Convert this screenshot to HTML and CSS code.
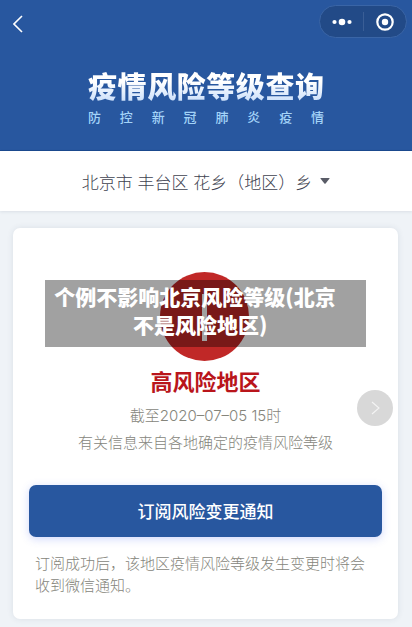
FILE: index.html
```html
<!DOCTYPE html>
<html lang="zh-CN">
<head>
  <meta charset="UTF-8" />
  <meta name="viewport" content="width=device-width, initial-scale=1.0"/>
  <title>疫情风险等级查询</title>
  <link rel="stylesheet" href="styles.css">
</head>
<body>
  <header class="header">
    <div class="nav">
      <button class="back" type="button" aria-label="返回">
        <svg width="10" height="18" viewBox="0 0 10 18"><path d="M9 1L1 9l8 8" fill="none" stroke="#fff" stroke-width="1.6"/></svg>
      </button>
      <div class="capsule">
        <button type="button" aria-label="更多">
          <svg width="20" height="8" viewBox="0 0 20 8" fill="#fff"><circle cx="2.5" cy="4" r="2.1"/><circle cx="10" cy="4" r="3.3"/><circle cx="17.5" cy="4" r="2.1"/></svg>
        </button>
        <button type="button" aria-label="关闭">
          <svg width="18" height="18" viewBox="0 0 18 18"><circle cx="9" cy="9" r="7.7" fill="none" stroke="#fff" stroke-width="2.2"/><circle cx="9" cy="9" r="3.2" fill="#fff"/></svg>
        </button>
      </div>
    </div>
    <div class="banner">
      <h1>疫情风险等级查询</h1>
      <p>防控新冠肺炎疫情</p>
    </div>
  </header>

  <button class="location" type="button">
    <span>北京市 丰台区 花乡（地区）乡</span>
    <svg width="10" height="6" viewBox="0 0 10 6"><path d="M1 0h8q1 0 .4.8L5.6 5.5q-.6.7-1.2 0L.6.8Q0 0 1 0z" fill="#595c67"/></svg>
  </button>

  <main class="card">
    <div class="risk">
      <svg class="risk-icon" width="91" height="90" viewBox="0 0 91 90"><circle cx="44.5" cy="44.5" r="44.5" fill="#c02827"/><path d="M42 22h5v47h-5z" fill="#fff"/></svg>
      <p class="caption">个例不影响北京风险等级(北京&emsp;
不是风险地区)&ensp;</p>
    </div>
    <h2>高风险地区</h2>
    <p class="info">截至2020–07–05 15时</p>
    <p class="info">有关信息来自各地确定的疫情风险等级</p>
    <button class="subscribe" type="button">订阅风险变更通知</button>
    <p class="note">订阅成功后，该地区疫情风险等级发生变更时将会收到微信通知。</p>
    <button class="next" type="button" aria-label="下一张">
      <svg width="9" height="14" viewBox="0 0 9 14"><path d="M1 1l7 6-7 6" fill="none" stroke="#f4f4f4" stroke-width="1.1"/></svg>
    </button>
  </main>
</body>
</html>
```
FILE: styles.css
```css
* {
  box-sizing: border-box;
}

body {
  margin: 0;
  background: #eff3f7;
  font-family: Inter, "Noto Sans CJK SC", sans-serif;
}

h1, h2, p {
  margin: 0;
}

button {
  margin: 0;
  padding: 0;
  border: 0;
  background: none;
  font-family: inherit;
  cursor: pointer;
}

svg {
  display: block;
}

.header {
  height: 151px;
  background: #28579f;
  border-bottom: 1px solid #1b4a8f;
}

.nav {
  display: flex;
  justify-content: space-between;
  padding: 5px 5px 0 13px;
}

.back {
  padding: 5px 0 0;
}

.capsule {
  display: flex;
  width: 88px;
  height: 33px;
  background: #224a87;
  border: 1px solid #3a65a6;
  border-radius: 17px;
}

.capsule button {
  display: flex;
  flex: 1;
  justify-content: center;
  align-items: center;
}

.capsule button + button {
  position: relative;
}

.capsule button + button::before {
  content: "";
  position: absolute;
  left: 0;
  top: 6px;
  bottom: 6px;
  width: 1px;
  background: #3a5e96;
}

.banner {
  width: 236px;
  margin: 30px auto 0;
  color: #a3d3f8;
}

.banner h1 {
  font-size: 29px;
  line-height: 40px;
  font-weight: 900;
  text-align-last: justify;
  background: linear-gradient(#fff 35%, #cfe2fb 80%);
  -webkit-background-clip: text;
  background-clip: text;
  color: transparent;
}

.banner p {
  font-size: 13px;
  line-height: 18px;
  font-weight: 500;
  text-align-last: justify;
}

.location {
  display: flex;
  justify-content: center;
  align-items: center;
  gap: 8px;
  width: 100%;
  height: 60px;
  background: #fff;
  box-shadow: 0 1px 3px rgba(40, 60, 90, 0.1);
  color: #404250;
  font-size: 17px;
  font-weight: 300;
}

.card {
  position: relative;
  margin: 17px 14px 8px 13px;
  padding: 44px 16px 22px;
  background: #fff;
  border-radius: 7px;
  box-shadow: 0 0 6px rgba(40, 60, 90, 0.1);
  text-align: center;
}

.risk {
  position: relative;
}

.risk-icon {
  margin: 0 auto;
}

/* translucent strip over the icon */
.caption {
  position: absolute;
  left: 16px;
  right: 16px;
  top: 8px;
  padding: 2px 0 9px;
  background: rgba(0, 0, 0, 0.37);
  color: #fff;
  font-family: "Noto Sans CJK SC", sans-serif;
  font-size: 21px;
  line-height: 28px;
  font-weight: 900;
  white-space: pre;
}

.card h2 {
  margin: 4px 0;
  color: #b9151b;
  font-size: 22px;
  line-height: 32px;
  font-weight: 700;
}

.info {
  color: #85857b;
  font-size: 15px;
  line-height: 27px;
  font-weight: 300;
}

.subscribe {
  display: block;
  width: 100%;
  height: 52px;
  margin: 29px 0 16px;
  padding-bottom: 2px;
  background: #28579f;
  border-radius: 7px;
  box-shadow: 0 2px 8px rgba(70, 100, 240, 0.25);
  color: #fff;
  font-size: 17px;
  font-weight: 500;
}

.note {
  padding: 0 6px;
  color: #85857b;
  font-size: 15px;
  line-height: 22px;
  font-weight: 300;
  text-align: left;
}

.next {
  position: absolute;
  right: 5px;
  top: 162px;
  display: flex;
  justify-content: center;
  align-items: center;
  width: 36px;
  height: 36px;
  background: #d8d8d8;
  border-radius: 50%;
}
```
